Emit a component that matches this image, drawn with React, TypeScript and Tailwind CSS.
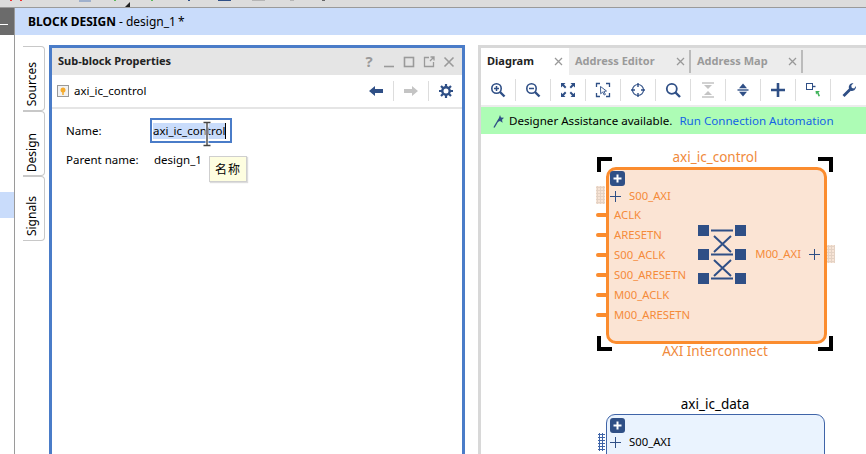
const sans = "font-['Noto_Sans','DejaVu_Sans',sans-serif]";

const Ico = ({ children, className = 'w-4 h-4' }: { children: React.ReactNode; className?: string }) => (
  <svg viewBox="0 0 16 16" className={className} fill="none">
    {children}
  </svg>
);

const navy = '#2f4f86';

const toolbarIcons = [
  <Ico key="zi">
    <circle cx="6.5" cy="6.5" r="4.7" stroke={navy} strokeWidth="1.6" />
    <path d="M4 6.5h5M6.5 4v5" stroke={navy} strokeWidth="1.5" />
    <path d="M10 10l4.5 4.5" stroke={navy} strokeWidth="2.4" />
  </Ico>,
  <Ico key="zo">
    <circle cx="6.5" cy="6.5" r="4.7" stroke={navy} strokeWidth="1.6" />
    <path d="M4 6.5h5" stroke={navy} strokeWidth="1.5" />
    <path d="M10 10l4.5 4.5" stroke={navy} strokeWidth="2.4" />
  </Ico>,
  <Ico key="fit">
    <path d="M1 1h4.500L4 2.600l2.400 2.400-1.400 1.400L2.600 4 1 5.500zM15 1v4.500L13.400 4 11 6.400 9.600 5 12 2.600 10.500 1zM1 15v-4.500L2.600 12 5 9.600 6.400 11 4 13.400 5.500 15zM15 15h-4.500L12 13.400 9.600 11 11 9.600l2.400 2.400 1.600-1.500z" fill={navy} />
  </Ico>,
  <Ico key="sel">
    <path d="M1.500 5V1.500H5M11 1.500h3.500V5M1.500 11v3.500H5M11 14.500h3.500V11" stroke={navy} strokeWidth="1.300" />
    <path d="M5.500 4.500l6 4.500-2.600.4 1.500 3-1.200.6-1.500-3-2 1.800z" stroke={navy} strokeWidth="0.900" fill="#fff" />
  </Ico>,
  <Ico key="center">
    <circle cx="8" cy="8" r="5.500" stroke={navy} strokeWidth="1.200" />
    <path d="M8 1v4M8 11v4M1 8h4M11 8h4" stroke={navy} strokeWidth="1.400" />
  </Ico>,
  <Ico key="search">
    <circle cx="6.800" cy="6.800" r="5" stroke={navy} strokeWidth="1.800" />
    <path d="M10.500 10.500l4.500 4.500" stroke={navy} strokeWidth="2.400" />
  </Ico>,
  <Ico key="collapse">
    <path d="M2 1h12M2 15h12" stroke="#c4c4c4" strokeWidth="1.400" />
    <path d="M4 3h8L8 7zM4 13h8L8 9z" fill="#c4c4c4" />
  </Ico>,
  <Ico key="expand">
    <path d="M2.500 8h11" stroke={navy} strokeWidth="1.400" />
    <path d="M4 6.200L8 1.500l4 4.700zM4 9.800L8 14.500l4-4.700z" fill={navy} />
  </Ico>,
  <Ico key="plus">
    <path d="M8 1v14M1 8h14" stroke={navy} strokeWidth="2.600" />
  </Ico>,
  <Ico key="port">
    <rect x="1.500" y="1.500" width="6" height="6" fill="#fff" stroke={navy} strokeWidth="1" />
    <path d="M7.500 4.500h3" stroke={navy} strokeWidth="1.400" />
    <path d="M10.500 9h4.500l-1.500 1.300 1.500 3.700-1.500.5-1.300-3.300-1.200 1.300z" fill="#3fb35a" />
  </Ico>,
  <Ico key="wrench">
    <path d="M1.500 13l6.500-6.500c-.8-2.500.9-5.500 4.500-5.500l-2.300 2.700.7 2.200 2.200.6L15 4c.3 3.500-2.500 5.600-5.200 4.700L3.500 15z" fill={navy} />
  </Ico>,
];

const portsLeft = ['ACLK', 'ARESETN', 'S00_ACLK', 'S00_ARESETN', 'M00_ACLK', 'M00_ARESETN'];

const Corner = ({ className }: { className: string }) => (
  <span className={`absolute w-[15px] h-[15px] border-black ${className}`} />
);

// Crossbar glyph in the middle of the AXI Interconnect block
const CrossbarGlyph = () => (
  <svg width="48" height="60" viewBox="0 0 48 60">
    {[0, 24, 48].map((y) => (
      <g key={y} fill={navy}>
        <rect x="0" y={y} width="11" height="11" />
        <rect x="37" y={y} width="11" height="11" />
      </g>
    ))}
    <path d="M13 5.500h22M13 29.500h22M13 53.500h22" stroke={navy} strokeWidth="1.800" />
    <path d="M16 11l17 16M33 11L16 27M16 35l17 16M33 35L16 51" stroke={navy} strokeWidth="2" />
  </svg>
);

const ExpandBadge = ({ className }: { className: string }) => (
  <span className={`absolute w-[15px] h-[15px] rounded-[3px] bg-[#2f4f86] flex items-center justify-center ${className}`}>
    <svg width="9" height="9" viewBox="0 0 9 9">
      <path d="M4.500 0.500v8M0.500 4.500h8" stroke="#fff" strokeWidth="2" />
    </svg>
  </span>
);

const PlusMark = () => (
  <svg width="11" height="11" viewBox="0 0 11 11">
    <path d="M5.500 0v11M0 5.500h11" stroke={navy} strokeWidth="1" />
  </svg>
);

const Diagram = () => (
  <div className="relative flex-1 bg-white overflow-hidden">
    {/* control block */}
    <div className="absolute left-[118px] top-[15px] w-[232px] text-center text-[13.5px] leading-[16px] text-[#f08a3c]">axi_ic_control</div>
    <div className="absolute left-[116px] top-[23px] w-[236px] h-[194px]">
      <Corner className="left-0 top-0 border-l-[4px] border-t-[4px]" />
      <Corner className="right-0 top-0 border-r-[4px] border-t-[4px]" />
      <Corner className="left-0 bottom-0 border-l-[4px] border-b-[4px]" />
      <Corner className="right-0 bottom-0 border-r-[4px] border-b-[4px]" />
    </div>
    <div className="absolute left-[125px] top-[33px] w-[221px] h-[177px] border-[3px] border-[#fb8c2e] rounded-[10px] bg-[#fbe4d4] text-[11.3px] leading-[20px] text-[#f58b3a]">
      <ExpandBadge className="left-[1px] top-[1px]" />
      <div className="absolute left-[1px] top-[16px] flex items-center h-[20px] gap-[8px]">
        <PlusMark />
        <span>S00_AXI</span>
      </div>
      <div className="absolute left-[5px] top-[35px] flex flex-col">
        {portsLeft.map((p) => (
          <span key={p} className="h-[20px]">{p}</span>
        ))}
      </div>
      <div className="absolute left-[89px] top-[55px]">
        <CrossbarGlyph />
      </div>
      <div className="absolute right-[4px] top-[74px] flex items-center h-[20px] gap-[8px]">
        <span>M00_AXI</span>
        <PlusMark />
      </div>
    </div>
    {portsLeft.map((p, i) => (
      <span key={p} className="absolute left-[115px] w-[10px] h-[4px] rounded-l-sm bg-[#fb8c2e]" style={{ top: 79 + i * 20 }} />
    ))}
    <span className="absolute left-[115px] top-[52px] w-[9px] h-[18px] bg-[#f7e4d6] bg-[radial-gradient(#e4d2c4_1px,transparent_1.200px)] bg-[length:3px_3px]" />
    <span className="absolute left-[346px] top-[111px] w-[8px] h-[18px] bg-[#f7e4d6] bg-[radial-gradient(#e4d2c4_1px,transparent_1.200px)] bg-[length:3px_3px]" />
    <div className="absolute left-[118px] top-[208px] w-[232px] text-center text-[13.5px] leading-[18px] text-[#f08a3c]">AXI Interconnect</div>

    {/* data block */}
    <div className="absolute left-[118px] top-[262px] w-[232px] text-center text-[13.5px] leading-[16px] text-black">axi_ic_data</div>
    <div className="absolute left-[125px] top-[280px] w-[219px] h-[80px] border border-[#3f64a8] rounded-[9px] bg-[#eaf3fe] text-[11.3px] leading-[20px] text-black">
      <ExpandBadge className="left-[3px] top-[3px]" />
      <div className="absolute left-[3px] top-[17px] flex items-center h-[20px] gap-[8px]">
        <PlusMark />
        <span>S00_AXI</span>
      </div>
    </div>
    <span className="absolute left-[117px] top-[299px] w-[7px] h-[18px] bg-[radial-gradient(#3f64a8_1px,transparent_1.200px)] bg-[length:3px_3px]" />
  </div>
);

export default function App() {
  return (
    <div className={`w-[866px] h-[454px] overflow-hidden bg-white flex flex-col text-black ${sans}`}>
      <div className="relative h-[8px] shrink-0 bg-[#dcdcdc] border-b border-[#9a9a9a]">
        <svg width="866" height="7" className="absolute left-0 top-0">
          <path d="M11 0v1M21 0v1" stroke="#e33" strokeWidth="2" />
          <rect x="79" y="0" width="12" height="2" fill="#9fb0cc" />
          <rect x="114" y="0" width="2" height="1" fill="#5bb85b" />
          <path d="M125 7l5-5v5z" fill="#222" />
          <rect x="151" y="0" width="2" height="1" fill="#5bb85b" />
          <rect x="188" y="0" width="2" height="1" fill="#2f4f86" />
          <rect x="218" y="0" width="13" height="1" fill="#2f4f86" />
          <rect x="252" y="0" width="13" height="1" fill="#b5b5b5" />
          <rect x="290" y="0" width="4" height="1" fill="#b5b5b5" />
          <rect x="322" y="0" width="3" height="1" fill="#666" />
        </svg>
      </div>
      <div className="flex flex-1 min-h-0">
        {/* far left strip */}
        <div className="w-[15px] shrink-0 border-r border-[#9a9a9a] flex flex-col">
          <div className="h-[27px] bg-[#6b6b6b] flex items-start">
            <span className="mt-[16px] w-[8px] h-[1px] bg-white" />
          </div>
          <div className="h-[157px]" />
          <div className="h-[26px] bg-[#c9dcfb]" />
        </div>
        <div className="flex-1 flex flex-col min-w-0">
          <div className="h-[27px] shrink-0 bg-[#c9dcfb] flex items-center pl-[13px] text-[12px]">
            <span className="font-bold">BLOCK DESIGN</span>
            <span className="ml-[3px]">- design_1</span>
            <span className="ml-[2px]">*</span>
          </div>
          <div className="flex flex-1 min-h-0 pt-[10px]">
            {/* side tabs */}
            <div className="w-[34px] shrink-0 pl-[8px] pt-[1px] flex flex-col">
              {[
                { label: 'Sources', pad: 'pt-[11px]' },
                { label: 'Design', pad: 'pt-[19px]' },
                { label: 'Signals', pad: 'pt-[16px]' },
              ].map((t) => (
                <div key={t.label} className={`h-[65px] w-[22px] border border-l-0 border-[#c8c8c8] rounded-r-[4px] flex items-center justify-center pr-[3px] text-[12px] bg-white ${t.pad}`}>
                  <span className="[writing-mode:vertical-rl] rotate-180">{t.label}</span>
                </div>
              ))}
            </div>
            {/* properties panel */}
            <div className="w-[416px] shrink-0 border-[3px] border-b-0 border-[#4a7cc8] flex flex-col">
              <div className="h-[27px] shrink-0 bg-[#e5e5e5] flex items-center pl-[6px] pr-[7px]">
                <span className="font-bold text-[11px] text-[#222]">Sub-block Properties</span>
                <span className="ml-auto flex items-center gap-[8px]">
                  <span className="w-3 text-center font-bold text-[15px] leading-none text-[#9a9a9a]">?</span>
                  <svg width="12" height="12" viewBox="0 0 12 12"><path d="M1 10.500h10" stroke="#9a9a9a" strokeWidth="1.600" /></svg>
                  <svg width="12" height="12" viewBox="0 0 12 12"><rect x="1.500" y="1.500" width="9" height="9" stroke="#9a9a9a" strokeWidth="1.600" fill="none" /></svg>
                  <svg width="12" height="12" viewBox="0 0 12 12"><path d="M6 1.500H1.500v9h9V6M7 5l4-4M7.500 1H11v3.500" stroke="#9a9a9a" strokeWidth="1.300" fill="none" /></svg>
                  <svg width="12" height="12" viewBox="0 0 12 12"><path d="M1.500 1.500l9 9M10.500 1.500l-9 9" stroke="#9a9a9a" strokeWidth="1.600" /></svg>
                </span>
              </div>
              <div className="h-[34px] shrink-0 border-b-2 border-[#e5e5e5] flex items-center pl-[5px] pr-[9px]">
                <svg width="12" height="12" viewBox="0 0 12 12">
                  <rect x="0.500" y="0.500" width="11" height="11" fill="#f2f2f2" stroke="#999" />
                  <circle cx="6" cy="5" r="2.500" fill="#f5ab2e" />
                  <path d="M6 7v3" stroke="#f5ab2e" strokeWidth="1.500" />
                </svg>
                <span className="ml-[5px] text-[11.5px]">axi_ic_control</span>
                <span className="ml-auto flex items-center h-[20px]">
                  <svg width="14" height="10" viewBox="0 0 14 10"><path d="M0 5l6-5v3h8v4H6v3z" fill={navy} /></svg>
                  <span className="mx-[10px] w-px h-[20px] bg-[#ddd]" />
                  <svg width="14" height="10" viewBox="0 0 14 10"><path d="M14 5L8 0v3H0v4h8v3z" fill="#c4c4c4" /></svg>
                  <span className="mx-[10px] w-px h-[20px] bg-[#ddd]" />
                  <svg width="14" height="14" viewBox="0 0 14 14">
                    <circle cx="7" cy="7" r="3.700" stroke={navy} strokeWidth="2.400" fill="none" />
                    <path d="M7 0v3M7 11v3M0 7h3M11 7h3M2 2l2 2M10 10l2 2M12 2l-2 2M4 10l-2 2" stroke={navy} strokeWidth="2.200" />
                  </svg>
                </span>
              </div>
              <div className="relative flex-1 pl-[14px] pt-[9px] text-[11.5px]">
                <div className="flex items-center h-[25px]">
                  <span className="w-[84px]">Name:</span>
                  <span className="w-[82px] h-[25px] border-[2px] border-[#4a7cc8] flex items-center pl-[1px]">
                    <span className="bg-[#c9dcfb] border-r border-black leading-[16px] h-[16px]">axi_ic_control</span>
                  </span>
                </div>
                <div className="flex items-center h-[24px] mt-[5px]">
                  <span className="w-[88px]">Parent name:</span>
                  <span>design_1</span>
                </div>
                {/* tooltip */}
                <div className="absolute left-[157px] top-[47px] w-[38px] h-[26px] bg-[#fefee0] border border-[#cfcfcf] shadow-[1px_1px_1px_#ddd] flex items-center justify-center text-[12px] tracking-[1px] font-['Noto_Sans_CJK_SC',sans-serif]">
                  名称
                </div>
                {/* I-beam cursor */}
                <svg className="absolute left-[150px] top-[12px]" width="10" height="27" viewBox="0 0 10 27">
                  <path d="M1 1h8M1 25h8M5 1v24" stroke="#fff" strokeWidth="3" />
                  <path d="M1.500 1.500h7M1.500 24.500h7M5 1.500v23" stroke="#444" strokeWidth="1.400" />
                </svg>
              </div>
            </div>
            <div className="w-[13px] shrink-0" />
            {/* diagram panel */}
            <div className="flex-1 min-w-0 border-l-[3px] border-t-[3px] border-[#d8d8d8] flex flex-col">
              <div className="h-[27px] shrink-0 bg-[#ececec] flex items-stretch text-[11px]">
                <div className="w-[88px] bg-white flex items-center justify-between pl-[6px] pr-[6px]">
                  <span className="font-bold text-[#222]">Diagram</span>
                  <svg width="9" height="9" viewBox="0 0 9 9"><path d="M1 1l7 7M8 1L1 8" stroke="#999" strokeWidth="1.300" /></svg>
                </div>
                <div className="w-[122px] flex items-center justify-between pl-[6px] pr-[4px] border-r-2 border-[#bbb] h-[23px] self-start mt-[2px]">
                  <span className="font-bold text-[#9a9a9a]">Address Editor</span>
                  <svg width="9" height="9" viewBox="0 0 9 9"><path d="M1 1l7 7M8 1L1 8" stroke="#999" strokeWidth="1.300" /></svg>
                </div>
                <div className="w-[112px] flex items-center justify-between pl-[6px] pr-[4px] border-r-2 border-[#bbb] h-[23px] self-start mt-[2px]">
                  <span className="font-bold text-[#9a9a9a]">Address Map</span>
                  <svg width="9" height="9" viewBox="0 0 9 9"><path d="M1 1l7 7M8 1L1 8" stroke="#999" strokeWidth="1.300" /></svg>
                </div>
              </div>
              <div className="h-[32px] shrink-0 flex items-center border-b-2 border-[#ececec]">
                {toolbarIcons.map((icon, i) => (
                  <div key={i} className="w-[35px] h-[22px] shrink-0 flex items-center justify-center border-r border-[#ddd] last:border-r-0">
                    {icon}
                  </div>
                ))}
              </div>
              <div className="h-[27px] shrink-0 bg-[#adfcb5] flex items-center pl-[12px] text-[11.6px]">
                <svg width="14" height="14" viewBox="0 0 14 14">
                  <path d="M1 13.500L6 5" stroke={navy} strokeWidth="1.400" />
                  <path d="M7 1l1 2.500 3 .2-2 2 .6 3L7 7l-2.600 1z" fill={navy} />
                </svg>
                <span className="ml-[2px]">Designer Assistance available.</span>
                <span className="ml-[7px] text-[#1463e6]">Run Connection Automation</span>
              </div>
              <Diagram />
            </div>
          </div>
        </div>
      </div>
    </div>
  );
}
